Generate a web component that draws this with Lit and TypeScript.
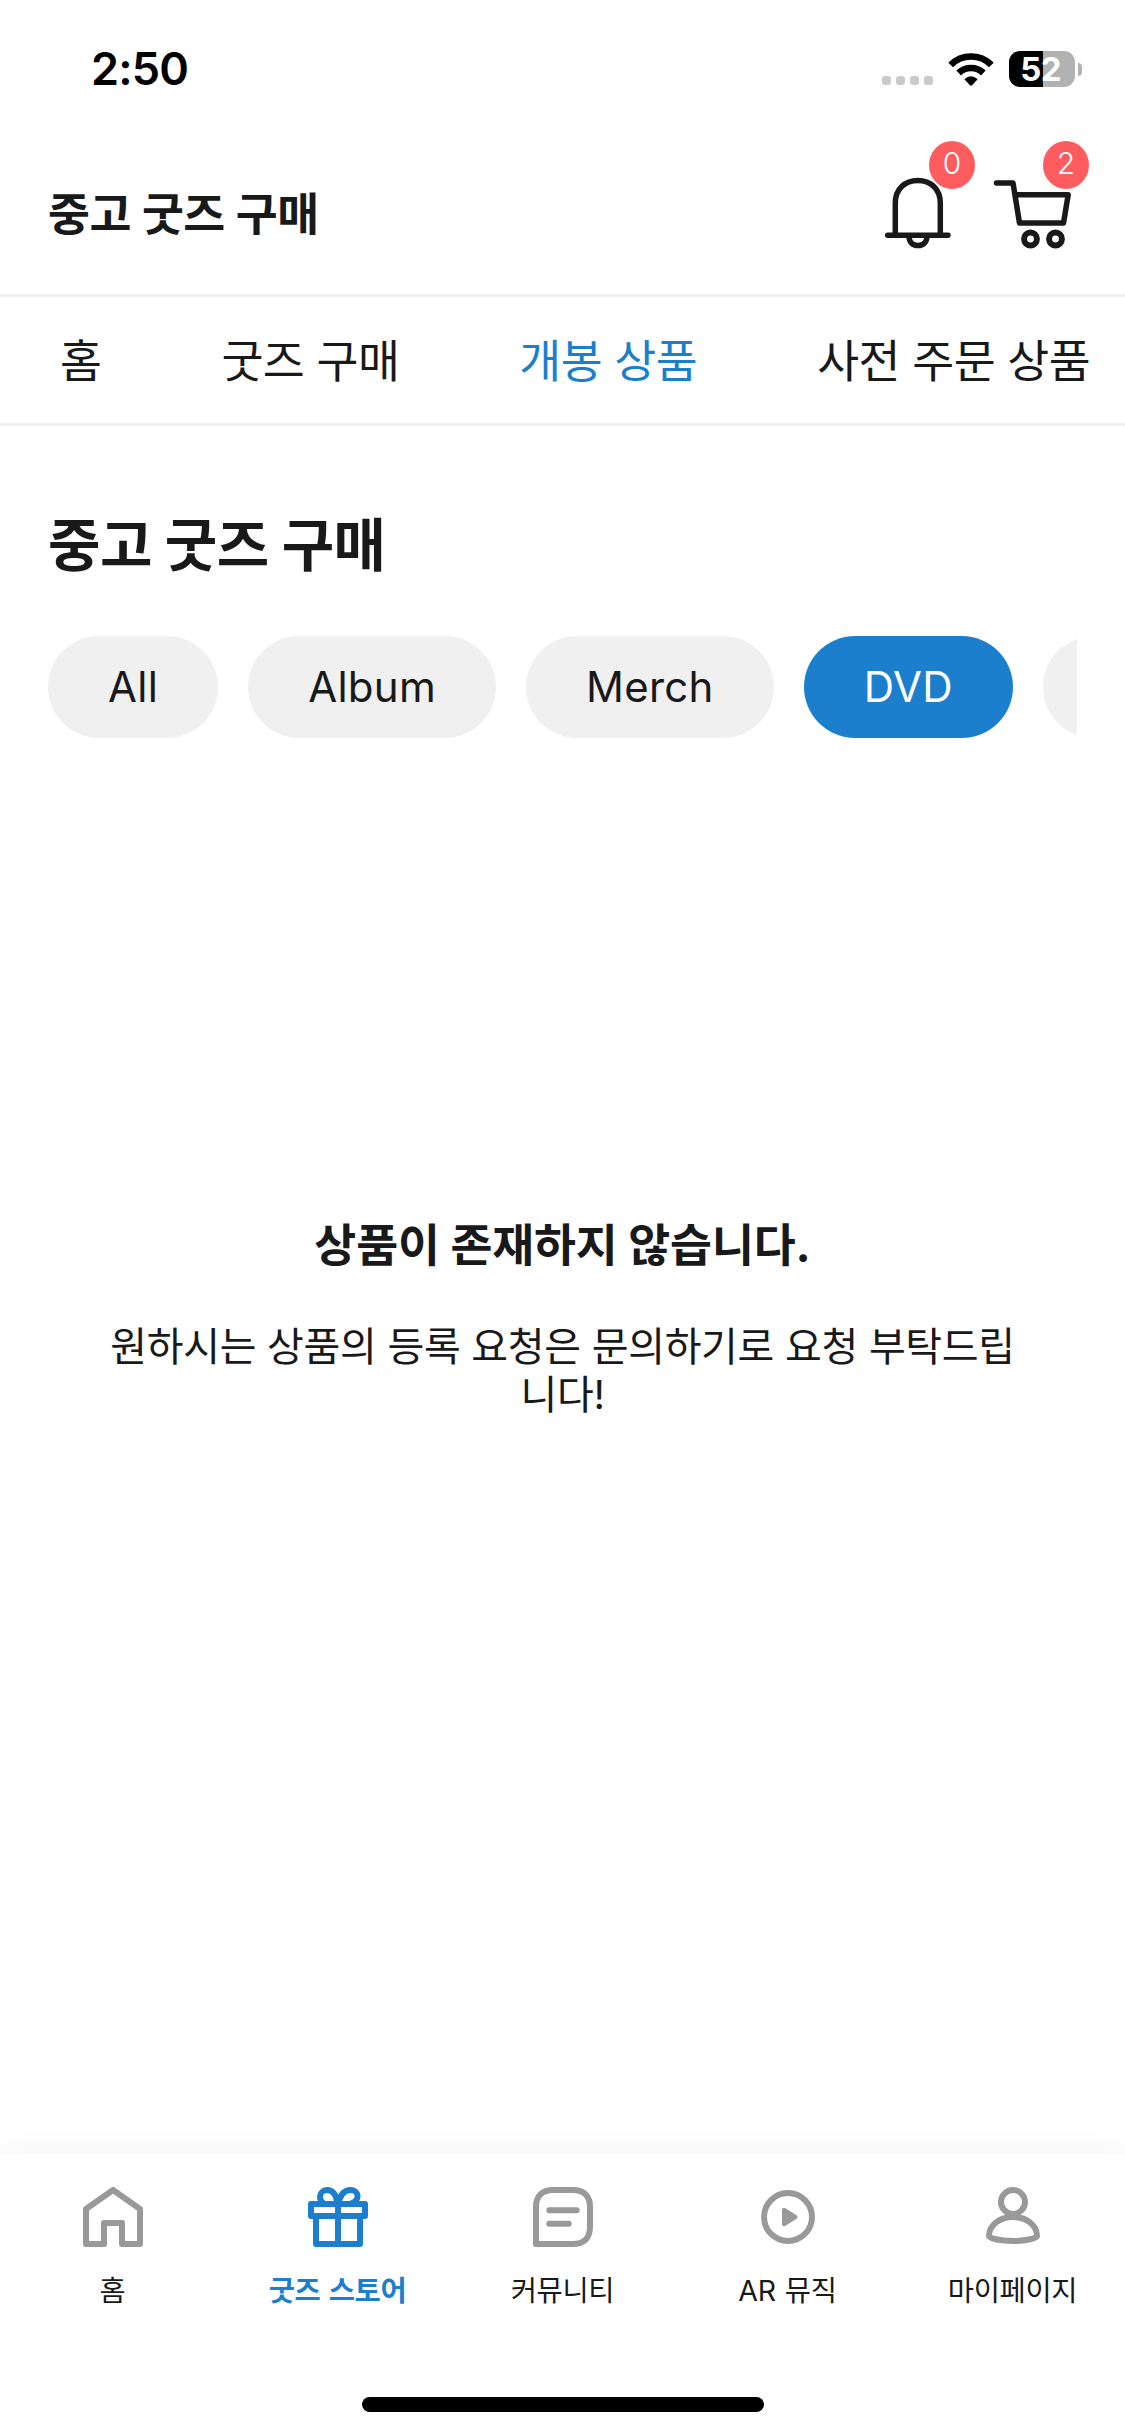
import { LitElement, html, css, svg } from "lit";
import { customElement, property } from "lit/decorators.js";
import { classMap } from "lit/directives/class-map.js";

const icons: Record<string, unknown> = {
  home: svg`<path d="M3 57V22L30 3L57 22V57H39V36H21V57Z" />`,
  gift: svg`<path d="M3 17H57V29H3ZM8 29V57H52V29M30 17V57" />
    <path d="M29 17C29 8.500 25 3 19 3C15 3 12 6 12 10C12 12.500 13 14.500 15 16M31 17C31 9 36 3 42.500 3C46.500 3 49.500 5.500 49.500 9C49.500 12.500 47 15 44 16" />`,
  community: svg`<path d="M3 57V20C3 9 9 3 20 3H40C51 3 57 9 57 20V40C57 51 51 57 40 57Z" />
    <path d="M16.300 23.200H43.700M16.300 36.800H35.700" />`,
  play: svg`<circle cx="30" cy="30" r="24" />
    <path class="solid" d="M26 22.800L37.500 30L26 37.200Z" />`,
  person: svg`<circle cx="30" cy="15" r="12" />
    <path d="M6 49C6 38 17 30 30 30S54 38 54 49C54 51 44 54 30 54S6 51 6 49Z" />`,
};

@customElement("status-bar")
export class StatusBar extends LitElement {
  static styles = css`
    :host {
      display: flex;
      justify-content: space-between;
      align-items: flex-start;
      height: 131px;
      box-sizing: border-box;
      padding: 42px 43px 0 91px;
      color: #000;
    }
    .time {
      font-size: 45px;
      line-height: 54px;
      font-weight: 600;
      letter-spacing: -0.8px;
    }
    .system {
      display: flex;
      align-items: center;
      padding-top: 9px;
    }
    .dots {
      display: flex;
      gap: 5px;
      padding-top: 23px;
      margin-right: 15px;
    }
    .dot {
      width: 9px;
      height: 9px;
      border-radius: 3px;
      background: #cacaca;
    }
    .wifi {
      display: block;
      width: 46px;
      height: 33px;
      margin-right: 15px;
    }
    .battery {
      width: 66px;
      height: 36px;
      box-sizing: border-box;
      padding-right: 3px;
      border-radius: 11px;
      background: linear-gradient(to right, #000 34px, #b2b2b2 34px);
      color: #fff;
      font-size: 33px;
      font-weight: 700;
      line-height: 36px;
      text-align: center;
      letter-spacing: -0.8px;
    }
    .nub {
      width: 4px;
      height: 13px;
      margin-left: 3px;
      border-radius: 0 5px 5px 0;
      background: #b2b2b2;
    }
  `;
  render() {
    return html`
      <span class="time">2:50</span>
      <div class="system">
        <div class="dots">${[0, 1, 2, 3].map(() => html`<i class="dot"></i>`)}</div>
        <svg class="wifi" viewBox="0 0 138 99" fill="none" stroke="#000" stroke-width="20">
          <path d="M8 36A86 86 0 0 1 130 36" />
          <path d="M32 60A53 53 0 0 1 106 60" />
          <path d="M49 79Q69 61 89 79L72 97Q69 99 66 97Z" fill="#000" stroke="none" />
        </svg>
        <div class="battery">52</div>
        <i class="nub"></i>
      </div>
    `;
  }
}

@customElement("page-header")
export class PageHeader extends LitElement {
  static styles = css`
    :host {
      display: flex;
      justify-content: space-between;
      align-items: flex-start;
      height: 166px;
      box-sizing: border-box;
      padding: 0 54px 0 48px;
      border-bottom: 3px solid #f0f0f0;
    }
    .title {
      margin: 0;
      padding-top: 55px;
      font-size: 45.600px;
      line-height: 58px;
      font-weight: 600;
      letter-spacing: -0.011em;
    }
    .actions {
      display: flex;
      gap: 36px;
      padding-top: 42px;
    }
    .action {
      position: relative;
      width: 78px;
      height: 78px;
    }
    .glyph {
      display: block;
      width: 78px;
      height: 78px;
      fill: none;
      stroke: #191919;
      stroke-width: 5.500;
      stroke-linecap: round;
      stroke-linejoin: round;
    }
    .badge {
      position: absolute;
      left: 50px;
      top: -32px;
      width: 46px;
      height: 48px;
      border-radius: 50%;
      background: #ff5c5f;
      color: #fff;
      font-size: 30px;
      font-weight: 350;
      line-height: 45px;
      text-align: center;
    }
  `;
  render() {
    return html`
      <h1 class="title">중고 굿즈 구매</h1>
      <div class="actions">
        <div class="action">
          <svg class="glyph" viewBox="0 0 78 78">
            <path d="M16.300 62.300V30C16.300 16 26 7.500 38.800 7.500S61.300 16 61.300 30V62.300M8.700 62.300H69" />
            <path d="M30 63C30 69 33.500 72.500 39 72.500S48 69 48 63" />
          </svg>
          <span class="badge">0</span>
        </div>
        <div class="action">
          <svg class="glyph" viewBox="0 0 78 78">
            <path d="M3.500 10H20L26.500 50H70.500L75.200 21.700H22.500" />
            <g stroke-width="6"><circle cx="37.500" cy="66" r="6.400" /><circle cx="62.500" cy="66" r="6.400" /></g>
          </svg>
          <span class="badge">2</span>
        </div>
      </div>
    `;
  }
}

@customElement("section-tabs")
export class SectionTabs extends LitElement {
  @property({ attribute: false }) tabs: string[] = [];
  @property() selected = "";
  static styles = css`
    :host {
      display: flex;
      gap: 120px;
      height: 129px;
      box-sizing: border-box;
      padding: 36px 0 0 60px;
      border-bottom: 3px solid #f0f0f0;
      overflow: hidden;
    }
    .tab {
      flex: none;
      font-size: 45.600px;
      line-height: 58px;
      letter-spacing: -0.012em;
      white-space: nowrap;
    }
    .selected {
      color: #1b7fcd;
    }
  `;
  render() {
    return this.tabs.map(
      (t) => html`<span class=${classMap({ tab: true, selected: t === this.selected })}>${t}</span>`
    );
  }
}

@customElement("filter-chips")
export class FilterChips extends LitElement {
  @property({ attribute: false }) chips: string[] = [];
  @property() selected = "";
  static styles = css`
    :host {
      display: flex;
      gap: 30px;
      overflow: hidden;
    }
    .chip {
      flex: none;
      min-width: 120px;
      height: 102px;
      box-sizing: border-box;
      padding: 0 60px;
      border-radius: 51px;
      background: #f0f0f0;
      font-size: 42px;
      line-height: 102px;
      letter-spacing: 0.27px;
    }
    .selected {
      background: #1b7fcd;
      color: #fff;
    }
  `;
  render() {
    return this.chips.map(
      (c) => html`<span class=${classMap({ chip: true, selected: c === this.selected })}>${c}</span>`
    );
  }
}

@customElement("bottom-nav")
export class BottomNav extends LitElement {
  @property({ attribute: false }) items: { icon: string; label: string }[] = [];
  @property() selected = "";
  static styles = css`
    :host {
      display: flex;
      flex-direction: column;
      align-items: center;
      justify-content: space-between;
      height: 282px;
      box-sizing: border-box;
      padding: 33px 0 24px;
      background: #fff;
      box-shadow: 0 0 30px rgba(0, 0, 0, 0.055);
    }
    .items {
      display: grid;
      grid-template-columns: repeat(5, 1fr);
      width: 100%;
    }
    .item {
      display: flex;
      flex-direction: column;
      align-items: center;
      gap: 26px;
      color: #999;
    }
    .icon {
      width: 60px;
      height: 60px;
      fill: none;
      stroke: currentColor;
      stroke-width: 6;
      stroke-linecap: round;
      stroke-linejoin: round;
    }
    .solid {
      fill: currentColor;
      stroke-width: 4;
    }
    .label {
      color: #191919;
      font-size: 28.500px;
      line-height: 36px;
      letter-spacing: -0.012em;
      word-spacing: 1.500px;
      white-space: nowrap;
    }
    .selected,
    .selected .label {
      color: #1b7fcd;
      font-weight: 600;
    }
    .indicator {
      width: 402px;
      height: 15px;
      border-radius: 8px;
      background: #000;
    }
  `;
  render() {
    return html`
      <nav class="items">
        ${this.items.map(
          (i) => html`<div class=${classMap({ item: true, selected: i.label === this.selected })}>
            <svg class="icon" viewBox="0 0 60 60">${icons[i.icon]}</svg>
            <span class="label">${i.label}</span>
          </div>`
        )}
      </nav>
      <div class="indicator"></div>
    `;
  }
}

@customElement("app-root")
export class AppRoot extends LitElement {
  static styles = css`
    :host {
      display: flex;
      flex-direction: column;
      height: 2436px;
      overflow: hidden;
      background: #fff;
      color: #191919;
      font-family: Inter, "Noto Sans CJK KR", sans-serif;
    }
    .content {
      flex: 1;
      padding: 83px 48px 0;
    }
    .heading {
      margin: 0 0 53px;
      font-size: 57px;
      line-height: 74px;
      font-weight: 700;
      letter-spacing: -0.009em;
    }
    .empty {
      padding: 479px 54px 0;
      text-align: center;
    }
    .empty-title {
      margin: 0 0 48px;
      font-size: 45.600px;
      line-height: 58px;
      font-weight: 700;
      letter-spacing: -0.003em;
    }
    .empty-text {
      margin: 0;
      font-size: 40px;
      line-height: 48px;
      letter-spacing: -0.008em;
      word-break: break-all;
    }
  `;
  render() {
    return html`
      <status-bar></status-bar>
      <page-header></page-header>
      <section-tabs .tabs=${["홈", "굿즈 구매", "개봉 상품", "사전 주문 상품"]} selected="개봉 상품"></section-tabs>
      <main class="content">
        <h2 class="heading">중고 굿즈 구매</h2>
        <filter-chips .chips=${["All", "Album", "Merch", "DVD", ""]} selected="DVD"></filter-chips>
        <section class="empty">
          <h3 class="empty-title">상품이 존재하지 않습니다.</h3>
          <p class="empty-text">원하시는 상품의 등록 요청은 문의하기로 요청 부탁드립니다!</p>
        </section>
      </main>
      <bottom-nav
        .items=${[
          { icon: "home", label: "홈" },
          { icon: "gift", label: "굿즈 스토어" },
          { icon: "community", label: "커뮤니티" },
          { icon: "play", label: "AR 뮤직" },
          { icon: "person", label: "마이페이지" },
        ]}
        selected="굿즈 스토어"
      ></bottom-nav>
    `;
  }
}
